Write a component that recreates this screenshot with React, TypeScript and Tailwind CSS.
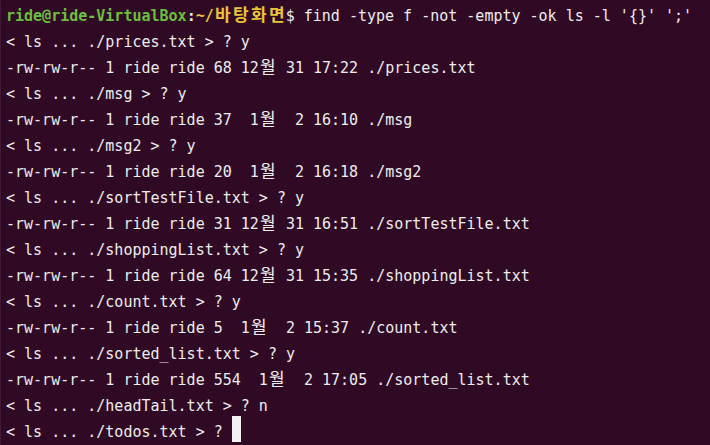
import React from "react";

type Seg = { t: string; c?: string };

const lines: Seg[][] = [
    [
        { t: "ride@ride-VirtualBox", c: "text-[#6cbf3e] font-bold" },
        { t: ":", c: "text-[#e8e8e8] font-bold" },
        { t: "~/바탕화면", c: "text-[#e9c43b] font-bold" },
        { t: "$ find -type f -not -empty -ok ls -l '{}' ';'" },
    ],
    [{ t: "< ls ... ./prices.txt > ? y" }],
    [{ t: "-rw-rw-r-- 1 ride ride 68 12월 31 17:22 ./prices.txt" }],
    [{ t: "< ls ... ./msg > ? y" }],
    [{ t: "-rw-rw-r-- 1 ride ride 37  1월  2 16:10 ./msg" }],
    [{ t: "< ls ... ./msg2 > ? y" }],
    [{ t: "-rw-rw-r-- 1 ride ride 20  1월  2 16:18 ./msg2" }],
    [{ t: "< ls ... ./sortTestFile.txt > ? y" }],
    [{ t: "-rw-rw-r-- 1 ride ride 31 12월 31 16:51 ./sortTestFile.txt" }],
    [{ t: "< ls ... ./shoppingList.txt > ? y" }],
    [{ t: "-rw-rw-r-- 1 ride ride 64 12월 31 15:35 ./shoppingList.txt" }],
    [{ t: "< ls ... ./count.txt > ? y" }],
    [{ t: "-rw-rw-r-- 1 ride ride 5  1월  2 15:37 ./count.txt" }],
    [{ t: "< ls ... ./sorted_list.txt > ? y" }],
    [{ t: "-rw-rw-r-- 1 ride ride 554  1월  2 17:05 ./sorted_list.txt" }],
    [{ t: "< ls ... ./headTail.txt > ? n" }],
    [{ t: "< ls ... ./todos.txt > ? " }],
];

// hangul takes two cells in the terminal grid
function Cells({ text }: { text: string }) {
    const parts = text.split(/([\uac00-\ud7a3])/);
    return (
        <>
            {parts.map((p, i) =>
                /[\uac00-\ud7a3]/.test(p) ? (
                    <span
                        key={i}
                        className="inline-block w-[18px] text-center text-[17px] leading-none [font-family:'Noto_Sans_CJK_KR',sans-serif]"
                    >
                        {p}
                    </span>
                ) : (
                    <span key={i}>{p}</span>
                )
            )}
        </>
    );
}

export default function App() {
    return (
        <div className="w-[710px] h-[445px] overflow-hidden bg-[#300a24] border-l border-[#451838] text-[#ededed] flex flex-col">
            <div className="flex-1 pt-[3px] pl-[5px] text-[15px] leading-[26px] whitespace-pre [font-family:'DejaVu_Sans_Mono',monospace]">
                {lines.map((segs, i) => (
                    <div key={i} className="h-[26px]">
                        {segs.map((s, j) => (
                            <span key={j} className={s.c}>
                                <Cells text={s.t} />
                            </span>
                        ))}
                        {i === lines.length - 1 && (
                            <span className="inline-block w-[9px] h-[26px] bg-[#f2f2f2] align-top -translate-y-[3px]" />
                        )}
                    </div>
                ))}
            </div>
            <div className="h-px bg-[#120510]" />
            <div className="h-px bg-[#6a2a58]" />
        </div>
    );
}
